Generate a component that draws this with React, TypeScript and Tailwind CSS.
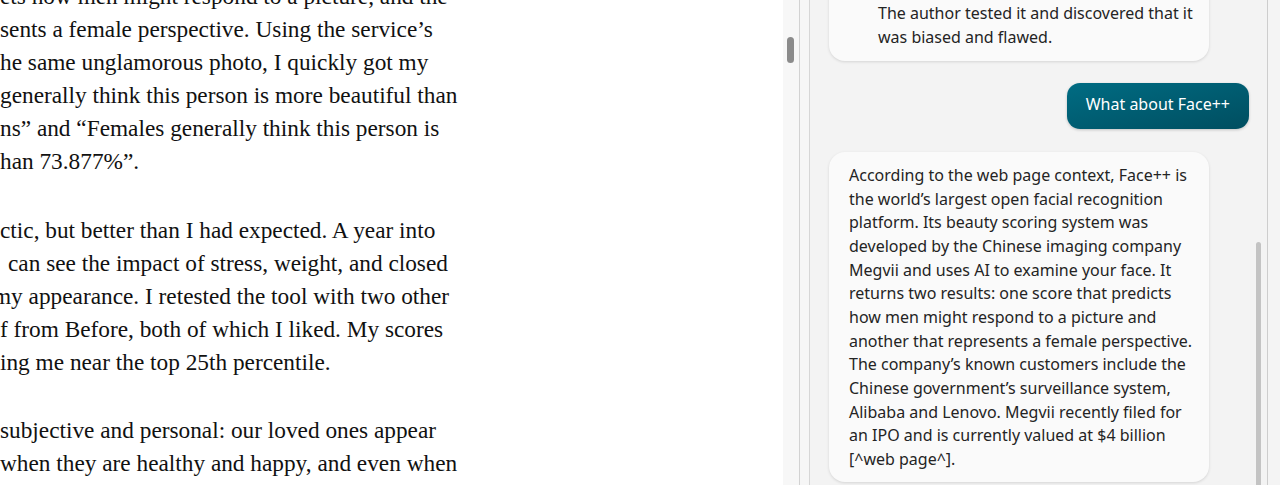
const serif = "font-['Liberation_Serif',serif]";

const article: { lines: { text: string; ml: string }[] }[] = [
  {
    lines: [
      { text: "ets how men might respond to a picture, and the", ml: "ml-0" },
      { text: "sents a female perspective. Using the service\u2019s", ml: "ml-0" },
      { text: "he same unglamorous photo, I quickly got my", ml: "ml-0" },
      { text: "generally think this person is more beautiful than", ml: "ml-0" },
      { text: "ns\u201d and \u201cFemales generally think this person is", ml: "ml-0" },
      { text: "han 73.877%\u201d.", ml: "ml-0" },
    ],
  },
  {
    lines: [
      { text: "ctic, but better than I had expected. A year into", ml: "ml-0" },
      { text: "can see the impact of stress, weight, and closed", ml: "ml-[8px]" },
      { text: "my appearance. I retested the tool with two other", ml: "-ml-[7px]" },
      { text: "f from Before, both of which I liked. My scores", ml: "ml-0" },
      { text: "ing me near the top 25th percentile.", ml: "ml-0" },
    ],
  },
  {
    lines: [
      { text: "subjective and personal: our loved ones appear", ml: "ml-0" },
      { text: "when they are healthy and happy, and even when", ml: "ml-0" },
    ],
  },
];

const answer = [
  "According to the web page context, Face++ is",
  "the world\u2019s largest open facial recognition",
  "platform. Its beauty scoring system was",
  "developed by the Chinese imaging company",
  "Megvii and uses AI to examine your face. It",
  "returns two results: one score that predicts",
  "how men might respond to a picture and",
  "another that represents a female perspective.",
  "The company\u2019s known customers include the",
  "Chinese government\u2019s surveillance system,",
  "Alibaba and Lenovo. Megvii recently filed for",
  "an IPO and is currently valued at $4 billion",
  "[^web page^].",
];

const chatFont = "font-['Noto_Sans',sans-serif] text-[16px] leading-[23.67px] text-[#242424]";

export default function App() {
  return (
    <div className="flex h-[485px] w-[1280px] overflow-hidden bg-white">
      {/* article */}
      <div className={`w-[783px] shrink-0 overflow-hidden bg-white text-[#111] ${serif}`}>
        <div className="-mt-[20px] flex flex-col gap-[35.5px]">
          {article.map((p, i) => (
            <div key={i}>
              {p.lines.map((l, j) => (
                <div key={j} className={`h-[33px] whitespace-nowrap text-[23.3px] leading-[33px] ${l.ml}`}>
                  {l.text}
                </div>
              ))}
            </div>
          ))}
        </div>
      </div>

      {/* page scrollbar */}
      <div className="w-[16px] shrink-0 bg-[#f7f7f7] pl-[4px] pt-[37px]">
        <div className="h-[26px] w-[7px] rounded-full bg-[#8b8b8b]" />
      </div>
      <div className="w-px shrink-0 bg-[#d2d2d2]" />
      <div className="w-[9px] shrink-0 bg-[#f6f6f6]" />
      <div className="w-px shrink-0 bg-[#d6d6d6]" />

      {/* sidebar */}
      <div className="flex flex-1 bg-[#f3f3f3]">
        <div className="flex flex-1 flex-col overflow-hidden">
          <div className={`-mt-[13px] flex flex-col ${chatFont}`}>
            <div className="ml-[19px] w-[380px] rounded-b-[16px] bg-[#fafafa] pb-[12px] pl-[49px] pt-[15px] shadow-[0_1px_3px_rgba(0,0,0,0.13)]">
              <div className="whitespace-nowrap">The author tested it and discovered that it</div>
              <div className="whitespace-nowrap">was biased and flawed.</div>
            </div>

            <div className="mr-[5px] mt-[22px] self-end rounded-[13px] bg-linear-to-br from-[#006c83] to-[#004e60] px-[19px] pb-[12px] pt-[10px] text-white shadow-[0_1px_3px_rgba(0,0,0,0.2)]">
              What about Face++
            </div>

            <div className="ml-[19px] mt-[23px] w-[380px] rounded-[16px] bg-[#fafafa] pb-[10px] pl-[20px] pt-[12px] shadow-[0_1px_3px_rgba(0,0,0,0.13)]">
              {answer.map((t, i) => (
                <div key={i} className="whitespace-nowrap">
                  {t}
                </div>
              ))}
            </div>
          </div>
        </div>
        <div className="w-[13px] shrink-0 pl-[2px] pt-[242px]">
          <div className="h-[260px] w-[5px] rounded-t-full bg-[#c3c3c3]" />
        </div>
      </div>
      <div className="w-px shrink-0 bg-[#cdcdcd]" />
      <div className="w-[12px] shrink-0 bg-[#f4f4f4]" />
    </div>
  );
}
